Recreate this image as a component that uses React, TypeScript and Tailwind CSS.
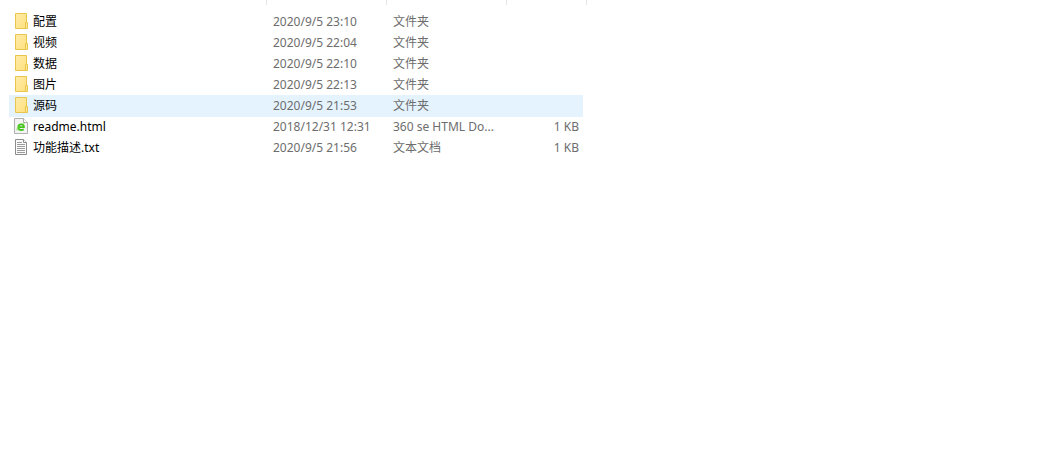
import { useState } from "react";
import clsx from "clsx";

type FileKind = "folder" | "html" | "text";

interface FileEntry {
  name: string;
  modified: string;
  type: string;
  size?: string;
  kind: FileKind;
}

const files: FileEntry[] = [
  { name: "配置", modified: "2020/9/5 23:10", type: "文件夹", kind: "folder" },
  { name: "视频", modified: "2020/9/5 22:04", type: "文件夹", kind: "folder" },
  { name: "数据", modified: "2020/9/5 22:10", type: "文件夹", kind: "folder" },
  { name: "图片", modified: "2020/9/5 22:13", type: "文件夹", kind: "folder" },
  { name: "源码", modified: "2020/9/5 21:53", type: "文件夹", kind: "folder" },
  { name: "readme.html", modified: "2018/12/31 12:31", type: "360 se HTML Do...", size: "1 KB", kind: "html" },
  { name: "功能描述.txt", modified: "2020/9/5 21:56", type: "文本文档", size: "1 KB", kind: "text" },
];

function FolderIcon() {
  return (
    <svg width="16" height="16" viewBox="0 0 16 16" className="mb-px shrink-0" aria-hidden="true">
      <defs>
        <linearGradient id="folder" x1="0" y1="0" x2="1" y2="1">
          <stop offset="0" stopColor="#ffecab" />
          <stop offset="1" stopColor="#ffe07c" />
        </linearGradient>
      </defs>
      <path d="M2.5.5h11v15h-11z" fill="url(#folder)" stroke="#e8c64d" />
      <path d="M12.5 9.5h2v6h-2z" fill="#ffe794" stroke="#e8c64d" />
    </svg>
  );
}

function HtmlIcon() {
  return (
    <svg width="16" height="16" viewBox="0 0 16 16" className="mb-px shrink-0" aria-hidden="true">
      <path d="M1.5.5h9l4 4v11h-13z" fill="#f3f3f3" stroke="#b0b0b0" />
      <path d="M10.5.5v4h4" fill="#fff" stroke="#b0b0b0" />
      <path
        d="M5.3 9.1h5.6c0-1.8-1-2.8-2.7-2.8-1.8 0-2.9 1.2-2.9 2.9s1.2 2.8 3 2.8c1 0 1.8-.3 2.4-.8"
        fill="none"
        stroke="#43c51c"
        strokeWidth="1.8"
      />
      <path d="M4.2 12.5c-.7-1 0-2.6 1.2-3.8M9.8 5.4c1-.5 1.8-.6 2.2-.1" fill="none" stroke="#8fdc5e" />
    </svg>
  );
}

function TextIcon() {
  return (
    <svg width="16" height="16" viewBox="0 0 16 16" className="mb-px shrink-0" aria-hidden="true">
      <path d="M2.5.5h8l3 3v12h-11z" fill="#fafafa" stroke="#8c8c8c" />
      <path d="M10.5.5v3h3" fill="#fff" stroke="#8c8c8c" />
      <path d="M4 3.5h5M4 5.5h8M4 7.5h8M4 9.5h8M4 11.5h8M4 13.5h8" stroke="#9b9b9b" />
    </svg>
  );
}

const icons = {
  folder: FolderIcon,
  html: HtmlIcon,
  text: TextIcon,
};

export default function App() {
  const [selected, setSelected] = useState("源码");

  return (
    <main className="bg-white font-['Noto_Sans','Noto_Sans_CJK_SC',sans-serif] text-xs">
      {/* Column dividers */}
      <div className="flex h-[5px]" aria-hidden="true">
        <div className="w-[267px] border-r border-[#e5e5e5]" />
        <div className="w-[120px] border-r border-[#e5e5e5]" />
        <div className="w-[120px] border-r border-[#e5e5e5]" />
        <div className="w-20 border-r border-[#e5e5e5]" />
      </div>

      <table className="mt-1.5 ml-[9px] w-[574px] table-fixed">
        <colgroup>
          <col className="w-[258px]" />
          <col className="w-[120px]" />
          <col className="w-[120px]" />
          <col />
        </colgroup>
        <tbody>
          {files.map((file) => {
            const Icon = icons[file.kind];
            return (
              <tr
                key={file.name}
                onClick={() => setSelected(file.name)}
                className={clsx(
                  "h-[21px] cursor-default whitespace-nowrap leading-5 text-[#6d6d6d]",
                  selected === file.name && "bg-[#e5f3ff] shadow-[0_1px_#e5f3ff]"
                )}
              >
                <td className="p-0 pl-1 text-black">
                  <div className="flex items-center gap-1">
                    <Icon />
                    <span>{file.name}</span>
                  </div>
                </td>
                <td className="p-0 pl-1.5">{file.modified}</td>
                <td className="p-0 pl-1.5">{file.type}</td>
                <td className="p-0 pr-1 text-right">{file.size}</td>
              </tr>
            );
          })}
        </tbody>
      </table>
    </main>
  );
}
